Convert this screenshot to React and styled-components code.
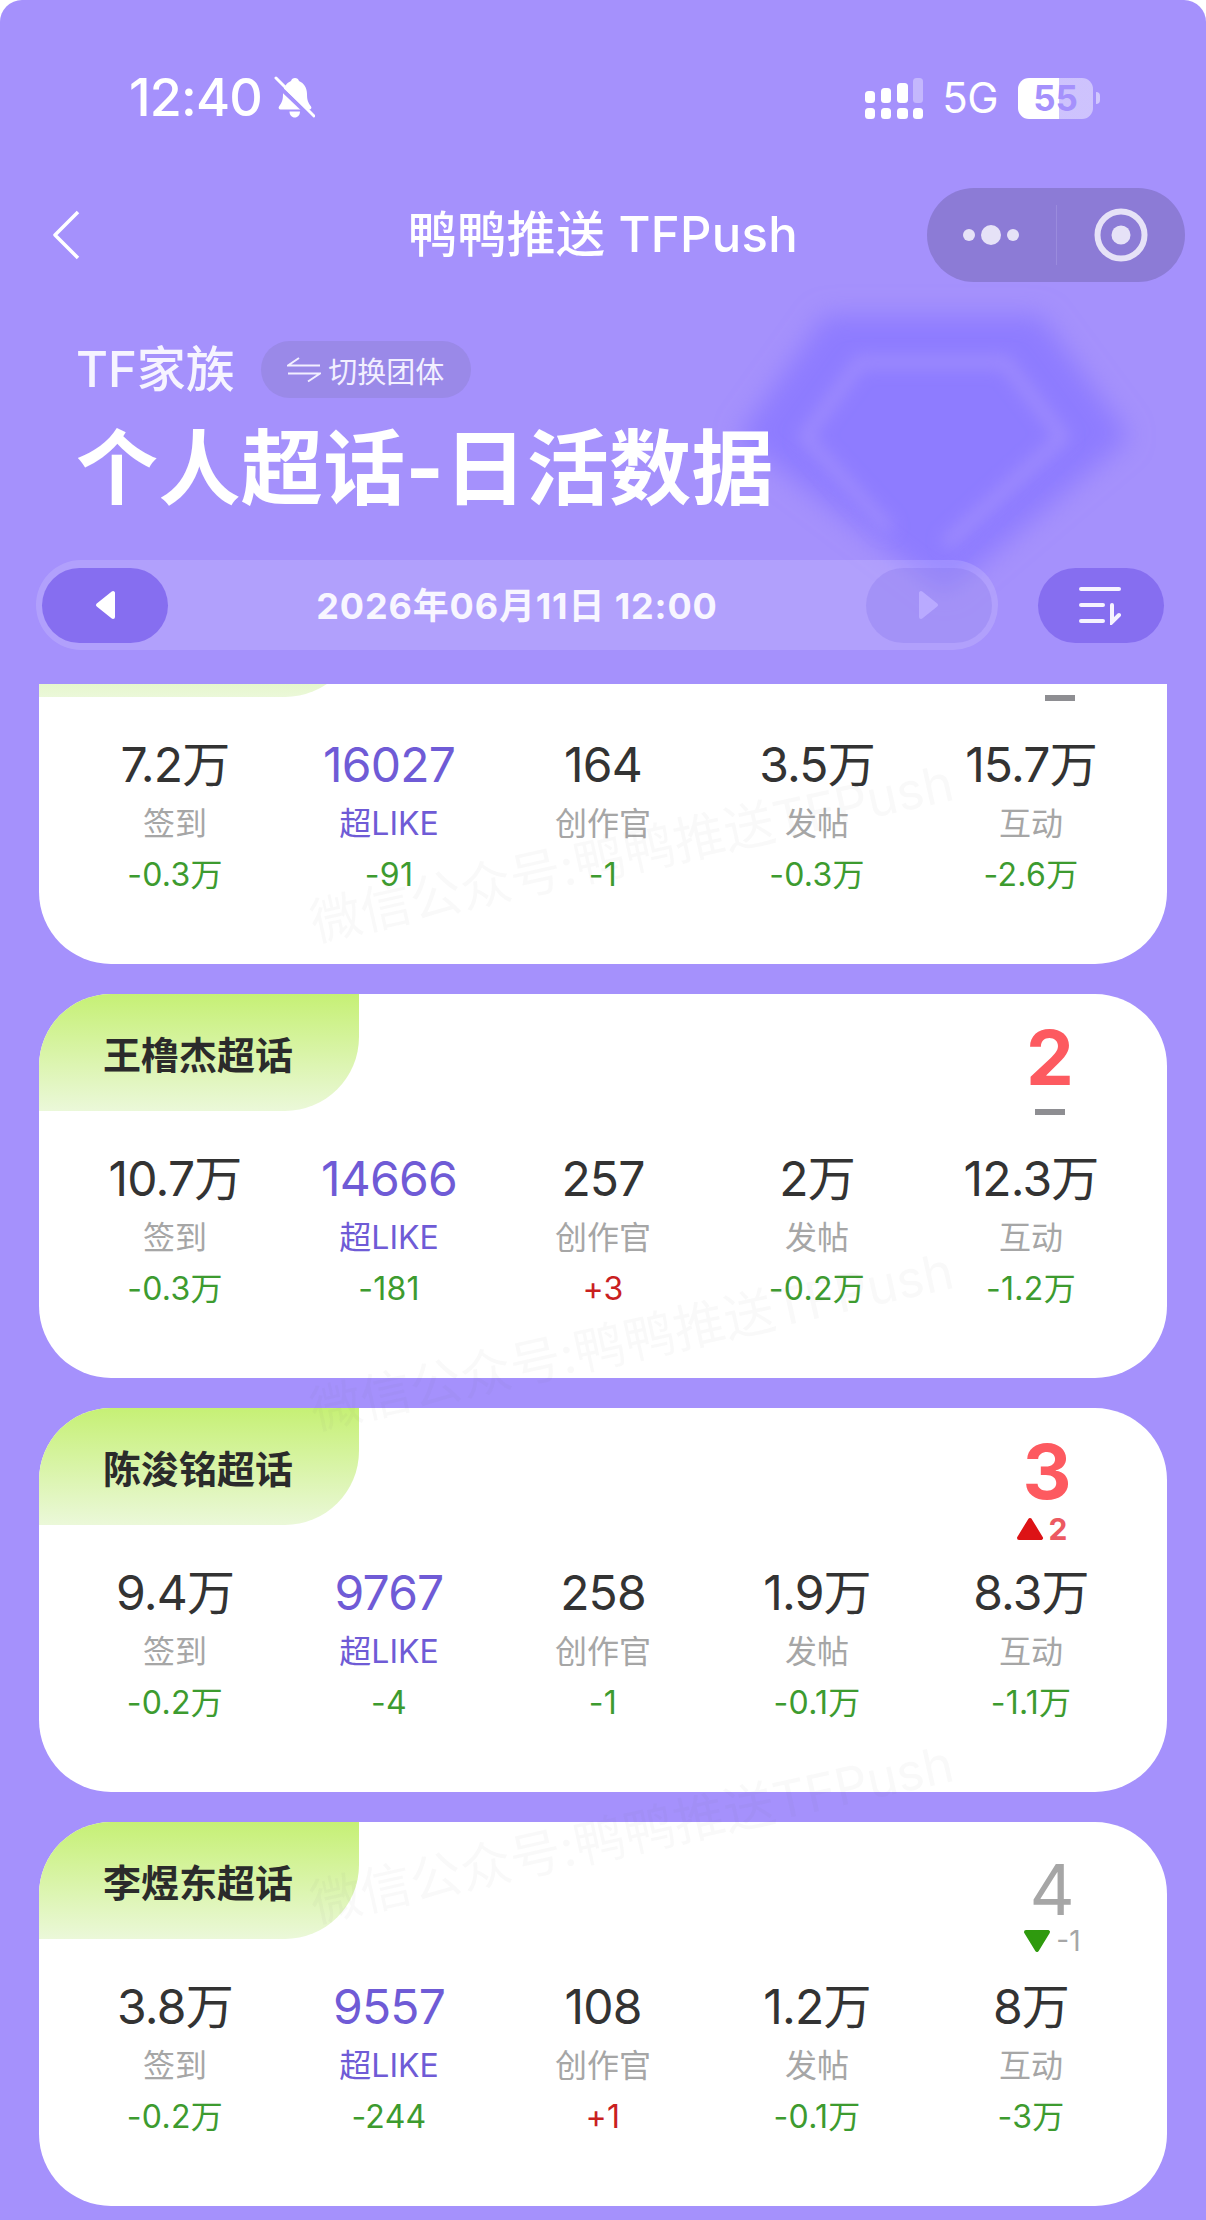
import React from "react";
import styled, { createGlobalStyle } from "styled-components";

const CJK = '"Noto Sans CJK SC", sans-serif';
const LATIN = `Inter, ${CJK}`;

const GlobalStyle = createGlobalStyle`
  html, body {
    margin: 0;
    padding: 0;
    background: #fff;
  }
  * {
    box-sizing: border-box;
  }
`;

const Page = styled.div`
  position: relative;
  width: 1206px;
  height: 2220px;
  display: flex;
  flex-direction: column;
  overflow: hidden;
  border-radius: 22px 22px 0 0;
  background: #a591fc;
  font-family: ${LATIN};
  color: #fff;
`;

const Gem = styled.svg`
  position: absolute;
  left: 690px;
  top: 270px;
  width: 490px;
  height: 370px;
`;

const StatusBar = styled.div`
  position: relative;
  height: 188px;
  padding: 77px 106px 0 129px;
  display: flex;
  justify-content: space-between;
  align-items: flex-start;
`;

const StatusLeft = styled.div`
  display: flex;
  align-items: center;
  height: 42px;
  gap: 11px;
`;

const Clock = styled.span`
  font-family: Inter, sans-serif;
  font-size: 52px;
  font-weight: 500;
  letter-spacing: -0.8px;
  line-height: 42px;
`;

const StatusRight = styled.div`
  display: flex;
  align-items: center;
  height: 42px;
`;

const Network = styled.span`
  font-family: Inter, sans-serif;
  font-size: 42px;
  line-height: 42px;
  margin: 0 20px 0 19px;
  letter-spacing: -0.5px;
`;

const Battery = styled.div`
  position: relative;
  width: 75px;
  height: 41px;
  border-radius: 11px;
  overflow: hidden;
  background: linear-gradient(90deg, #fff 0 41px, rgba(255, 255, 255, 0.45) 41px);
  color: #a591fc;
  font-family: Inter, sans-serif;
  font-size: 35px;
  font-weight: 700;
  line-height: 41px;
  text-align: center;
`;

const BatteryCap = styled.div`
  width: 4px;
  height: 12px;
  margin-left: 3px;
  border-radius: 0 6px 6px 0;
  background: rgba(255, 255, 255, 0.5);
`;

const NavBar = styled.div`
  position: relative;
  height: 94px;
  padding: 0 21px;
  display: grid;
  grid-template-columns: 1fr auto 1fr;
  align-items: center;
`;

const BackButton = styled.div`
  padding-left: 31px;
  display: flex;
`;

const Title = styled.div`
  font-size: 49px;
  font-weight: 500;
  line-height: 94px;
  letter-spacing: 0.3px;
`;

const Capsule = styled.div`
  justify-self: end;
  width: 258px;
  height: 94px;
  border-radius: 47px;
  background: #8c7bd6;
  display: flex;
  align-items: center;
`;

const CapsulePart = styled.div`
  flex: 1;
  height: 60px;
  display: flex;
  align-items: center;
  justify-content: center;
  gap: 6px;
  & + & {
    border-left: 1px solid #9a8bdd;
  }
`;

const Dot = styled.i`
  width: ${(p) => (p.$big ? 20 : 12)}px;
  height: ${(p) => (p.$big ? 20 : 12)}px;
  border-radius: 50%;
  background: #e6e2f7;
`;

const Hero = styled.div`
  position: relative;
  padding: 59px 0 0 76px;
`;

const FamilyRow = styled.div`
  display: flex;
  align-items: center;
  height: 57px;
  gap: 26px;
`;

const Family = styled.span`
  font-size: 49px;
  font-weight: 500;
  line-height: 57px;
  color: #f6f4ff;
`;

const SwitchPill = styled.div`
  height: 57px;
  width: 210px;
  border-radius: 29px;
  background: #9a89e8;
  display: flex;
  align-items: center;
  justify-content: center;
  gap: 7px;
  font-size: 29px;
  color: #f2efff;
`;

const PageTitle = styled.h1`
  margin: 21px 0 0;
  font-size: 82px;
  font-weight: 700;
  line-height: 100px;
  letter-spacing: 0.4px;
`;

const DateRow = styled.div`
  position: relative;
  margin-top: 41px;
  padding: 0 42px 0 36px;
  display: flex;
  align-items: center;
  justify-content: space-between;
`;

const DateBar = styled.div`
  width: 962px;
  height: 90px;
  padding: 0 6px;
  border-radius: 45px;
  background: rgba(255, 255, 255, 0.14);
  display: flex;
  align-items: center;
  justify-content: space-between;
`;

const DateText = styled.span`
  padding-bottom: 5px;
  font-size: 36px;
  font-weight: 700;
  letter-spacing: 0.85px;
  color: #f8f6ff;
`;

const RoundButton = styled.div`
  width: 126px;
  height: 75px;
  border-radius: 38px;
  display: flex;
  align-items: center;
  justify-content: center;
  background: ${(p) => (p.$muted ? "rgba(130, 110, 235, 0.28)" : "#866ef0")};
`;

const List = styled.div`
  position: relative;
  margin-top: 34px;
  flex: 1;
  min-height: 0;
  overflow: hidden;
  padding: 0 39px;
  display: flex;
  flex-direction: column;
  gap: 30px;
`;

const Card = styled.section`
  flex: none;
  height: 384px;
  border-radius: 72px;
  overflow: hidden;
  background: #fff;
  &:first-of-type {
    margin-top: -104px;
  }
`;

const CardHead = styled.header`
  height: 155px;
  display: flex;
  justify-content: space-between;
  align-items: flex-start;
`;

const NameTab = styled.div`
  width: 320px;
  height: 117px;
  padding: 5px 0 0 64px;
  border-radius: 0 0 74px 0;
  background: linear-gradient(180deg, #c6f075 0%, #ebf8d9 100%);
  font-size: 38px;
  font-weight: 700;
  line-height: 112px;
  color: #2b2b2b;
`;

const Rank = styled.div`
  width: 100px;
  margin-right: ${(p) => p.$right}px;
  padding-top: 25px;
  display: flex;
  flex-direction: column;
  align-items: center;
`;

const RankNum = styled.div`
  height: ${(p) => (p.$top ? 81 : 79)}px;
  padding-top: ${(p) => (p.$top ? 0 : 5)}px;
  font-family: Inter, sans-serif;
  font-size: ${(p) => (p.$top ? 76 : 70)}px;
  font-weight: ${(p) => (p.$top ? 700 : 400)};
  line-height: 76px;
  color: ${(p) => (p.$top ? "#fd5a60" : "#a6a6a6")};
`;

const Trend = styled.div`
  height: 30px;
  margin-left: ${(p) => (p.$up ? -11 : 0)}px;
  display: flex;
  align-items: center;
  justify-content: center;
  gap: 5px;
  white-space: nowrap;
  font-family: Inter, sans-serif;
  font-size: ${(p) => (p.$up ? 30 : 28)}px;
  font-weight: ${(p) => (p.$up ? 700 : 400)};
  color: ${(p) => (p.$up ? "#ec5a62" : "#a6a6a6")};
`;

const Dash = styled.i`
  display: block;
  width: 30px;
  height: 6px;
  margin-top: 9px;
  background: #8e8e92;
`;

const Stats = styled.div`
  padding: 0 29px;
  display: grid;
  grid-template-columns: repeat(5, 1fr);
`;

const Stat = styled.div`
  display: flex;
  flex-direction: column;
  align-items: center;
  white-space: nowrap;
`;

const Value = styled.div`
  font-size: 48px;
  line-height: 60px;
  letter-spacing: -0.8px;
  color: ${(p) => (p.$accent ? "#6f5bd6" : "#333")};
`;

const Label = styled.div`
  padding-top: 1px;
  font-size: 32px;
  line-height: 55px;
  color: ${(p) => (p.$accent ? "#6f5bd6" : "#a6a6a6")};
`;

const Delta = styled.div`
  font-size: 32px;
  line-height: 48px;
  letter-spacing: 0.3px;
  color: ${(p) => (p.$up ? "#c9201f" : "#3d9b2f")};
`;

const Watermark = styled.div`
  position: absolute;
  left: 631px;
  top: ${(p) => p.$top}px;
  transform: translate(-50%, -50%) rotate(-12.5deg);
  white-space: nowrap;
  font-size: 51px;
  color: rgba(110, 110, 110, 0.045);
  pointer-events: none;
`;

const labels = ["签到", "超LIKE", "创作官", "发帖", "互动"];

const cards = [
  {
    name: "",
    rank: 1,
    right: 57,
    stats: [["7.2万", "-0.3万"], ["16027", "-91"], ["164", "-1"], ["3.5万", "-0.3万"], ["15.7万", "-2.6万"]],
  },
  {
    name: "王橹杰超话",
    rank: 2,
    right: 67,
    stats: [["10.7万", "-0.3万"], ["14666", "-181"], ["257", "+3"], ["2万", "-0.2万"], ["12.3万", "-1.2万"]],
  },
  {
    name: "陈浚铭超话",
    rank: 3,
    right: 70,
    up: "2",
    stats: [["9.4万", "-0.2万"], ["9767", "-4"], ["258", "-1"], ["1.9万", "-0.1万"], ["8.3万", "-1.1万"]],
  },
  {
    name: "李煜东超话",
    rank: 4,
    right: 65,
    down: "-1",
    stats: [["3.8万", "-0.2万"], ["9557", "-244"], ["108", "+1"], ["1.2万", "-0.1万"], ["8万", "-3万"]],
  },
];

const BellOff = () => (
  <svg width="42" height="44" viewBox="0 0 42 44">
    <path
      fill="#fff"
      d="M22 2c2 0 3.500 1.300 4 3 5 2 8 7 8 13 0 6 1 8.500 4 12.500 1 1.500 0 3-1.500 3H7.500c-1.500 0-2.500-1.500-1.500-3 3-4 4-6.500 4-12.500 0-6 3-11 8-13 .5-1.700 2-3 4-3z"
    />
    <path fill="#fff" d="M16.500 35.500h10.500c0 3.500-2.300 6-5.250 6s-5.250-2.500-5.250-6z" />
    <path stroke="#a591fc" strokeWidth="4" d="M0 5l40 38" />
    <path stroke="#fff" strokeWidth="3" strokeLinecap="round" d="M3 2l38 38" />
  </svg>
);

const Signal = () => (
  <svg width="58" height="41" viewBox="0 0 58 41" fill="#fff">
    <rect x="0" y="30" width="10" height="11" rx="3.500" />
    <rect x="16" y="30" width="10" height="11" rx="3.500" />
    <rect x="32" y="30" width="11" height="11" rx="3.500" />
    <rect x="48" y="30" width="10" height="11" rx="3.500" />
    <rect x="0" y="13" width="10" height="12" rx="3.500" />
    <rect x="16" y="10" width="10" height="15" rx="3.500" />
    <rect x="32" y="5" width="11" height="20" rx="3.500" />
    <rect x="48" y="0" width="10" height="25" rx="3.500" opacity="0.35" />
  </svg>
);

const Chevron = () => (
  <svg width="28" height="50" viewBox="0 0 28 50" fill="none">
    <path d="M26 2 3 25l23 23" stroke="#fff" strokeWidth="3.500" strokeLinejoin="round" />
  </svg>
);

const Swap = () => (
  <svg width="34" height="26" viewBox="0 0 34 26" fill="none" stroke="#f2efff" strokeWidth="2">
    <path d="M12 1 1 8.500h32" />
    <path d="M1 16.500h32L21 24.500" />
  </svg>
);

const Arrow = ({ right, color }) => (
  <svg width="21" height="30" viewBox="0 0 21 30" style={right ? { transform: "scaleX(-1)" } : undefined}>
    <path d="M18 3v24L3 15z" fill={color} stroke={color} strokeWidth="4" strokeLinejoin="round" />
  </svg>
);

const SortIcon = () => (
  <svg width="44" height="40" viewBox="0 0 44 40" fill="none" stroke="#f6f3ff" strokeWidth="4" strokeLinecap="round">
    <path d="M2 4h38M2 20h22M2 36h22M33 20v17l7-7" />
  </svg>
);

const TrendMark = ({ up }) => (
  <svg width="28" height="24" viewBox="0 0 28 24" style={up ? undefined : { transform: "scaleY(-1)" }}>
    <path
      d="M14 3 25 21H3z"
      fill={up ? "#dd1316" : "#2f9a0e"}
      stroke={up ? "#dd1316" : "#2f9a0e"}
      strokeWidth="4"
      strokeLinejoin="round"
    />
  </svg>
);

const App = () => (
  <Page>
    <GlobalStyle />
    <Gem viewBox="690 270 490 370">
      <defs>
        <filter id="soft" x="-20%" y="-20%" width="140%" height="140%">
          <feGaussianBlur stdDeviation="13" />
        </filter>
        <filter id="softer" x="-20%" y="-20%" width="140%" height="140%">
          <feGaussianBlur stdDeviation="8" />
        </filter>
      </defs>
      <path d="M825 315H1040L1130 437 945 594 738 437z" fill="#8e7bff" filter="url(#soft)" />
      <path
        d="M890 530 805 437 860 362H1005L1063 437 945 545"
        fill="none"
        stroke="#9f8cfd"
        strokeWidth="12"
        strokeLinejoin="round"
        filter="url(#softer)"
      />
    </Gem>

    <StatusBar>
      <StatusLeft>
        <Clock>12:40</Clock>
        <BellOff />
      </StatusLeft>
      <StatusRight>
        <Signal />
        <Network>5G</Network>
        <Battery>55</Battery>
        <BatteryCap />
      </StatusRight>
    </StatusBar>

    <NavBar>
      <BackButton>
        <Chevron />
      </BackButton>
      <Title>鸭鸭推送 TFPush</Title>
      <Capsule>
        <CapsulePart>
          <Dot />
          <Dot $big />
          <Dot />
        </CapsulePart>
        <CapsulePart>
          <svg width="54" height="54" viewBox="0 0 54 54">
            <circle cx="27" cy="27" r="23.500" fill="none" stroke="#e6e2f7" strokeWidth="6" />
            <circle cx="27" cy="27" r="9.500" fill="#e6e2f7" />
          </svg>
        </CapsulePart>
      </Capsule>
    </NavBar>

    <Hero>
      <FamilyRow>
        <Family>TF家族</Family>
        <SwitchPill>
          <Swap />
          切换团体
        </SwitchPill>
      </FamilyRow>
      <PageTitle>个人超话-日活数据</PageTitle>
    </Hero>

    <DateRow>
      <DateBar>
        <RoundButton>
          <Arrow color="#fff" />
        </RoundButton>
        <DateText>2026年06月11日 12:00</DateText>
        <RoundButton $muted>
          <Arrow right color="#b9aaff" />
        </RoundButton>
      </DateBar>
      <RoundButton>
        <SortIcon />
      </RoundButton>
    </DateRow>

    <List>
      {cards.map((card) => (
        <Card key={card.rank}>
          <CardHead>
            <NameTab>{card.name}</NameTab>
            <Rank $right={card.right}>
              <RankNum $top={card.rank < 4}>{card.rank}</RankNum>
              {card.up && (
                <Trend $up>
                  <TrendMark up />
                  {card.up}
                </Trend>
              )}
              {card.down && (
                <Trend>
                  <TrendMark />
                  {card.down}
                </Trend>
              )}
              {!card.up && !card.down && <Dash />}
            </Rank>
          </CardHead>
          <Stats>
            {card.stats.map(([value, delta], i) => (
              <Stat key={labels[i]}>
                <Value $accent={i === 1}>{value}</Value>
                <Label $accent={i === 1}>{labels[i]}</Label>
                <Delta $up={delta.startsWith("+")}>{delta}</Delta>
              </Stat>
            ))}
          </Stats>
        </Card>
      ))}
      <Watermark $top={165}>微信公众号:鸭鸭推送TFPush</Watermark>
      <Watermark $top={653}>微信公众号:鸭鸭推送TFPush</Watermark>
      <Watermark $top={1146}>微信公众号:鸭鸭推送TFPush</Watermark>
    </List>
  </Page>
);

export default App;
